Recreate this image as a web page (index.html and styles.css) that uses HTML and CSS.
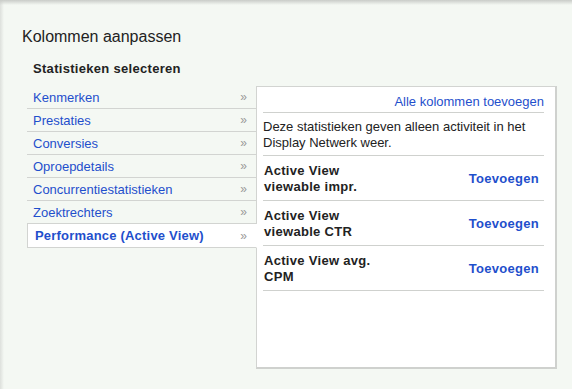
FILE: index.html
```html
<!DOCTYPE html>
<html lang="nl">
  <head>
    <meta charset="UTF-8" />
    <meta name="viewport" content="width=device-width, initial-scale=1.0" />
    <title>Kolommen aanpassen</title>
    <link rel="stylesheet" href="styles.css">
  </head>
  <body>
    <div class="page">
      <h1>Kolommen aanpassen</h1>
      <h2>Statistieken selecteren</h2>

      <div class="picker">
        <ul class="menu">
          <li><a href="#">Kenmerken</a><span class="arrow">&raquo;</span></li>
          <li><a href="#">Prestaties</a><span class="arrow">&raquo;</span></li>
          <li><a href="#">Conversies</a><span class="arrow">&raquo;</span></li>
          <li><a href="#">Oproepdetails</a><span class="arrow">&raquo;</span></li>
          <li><a href="#">Concurrentiestatistieken</a><span class="arrow">&raquo;</span></li>
          <li><a href="#">Zoektrechters</a><span class="arrow">&raquo;</span></li>
          <li class="selected"><a href="#">Performance (Active View)</a><span class="arrow">&raquo;</span></li>
        </ul>

        <div class="panel">
          <div class="panel-head">
            <a href="#">Alle kolommen toevoegen</a>
          </div>
          <p class="note">
            Deze statistieken geven alleen activiteit in het Display Netwerk weer.
          </p>
          <div class="stat">
            <span class="stat-name">Active View<br />viewable impr.</span>
            <a href="#" class="add">Toevoegen</a>
          </div>
          <div class="stat">
            <span class="stat-name">Active View<br />viewable CTR</span>
            <a href="#" class="add">Toevoegen</a>
          </div>
          <div class="stat">
            <span class="stat-name">Active View avg.<br />CPM</span>
            <a href="#" class="add">Toevoegen</a>
          </div>
        </div>
      </div>
    </div>
  </body>
</html>
```

FILE: styles.css
```css
html,
body {
  margin: 0;
  height: 100%;
}
body {
  font-family: Arial, "Liberation Sans", sans-serif;
  font-size: 13px;
  color: #222;
  background: #f4f8f3;
}
a {
  text-decoration: none;
  color: #1f4fcc;
}
.page {
  height: 100%;
  box-sizing: border-box;
  padding: 27px 15px 0 22px;
  background-image: linear-gradient(#c9ccc8, rgba(244, 248, 243, 0) 5px),
    linear-gradient(to right, #dde0dc, rgba(244, 248, 243, 0) 4px);
}
h1 {
  margin: 0;
  font-size: 16px;
  font-weight: normal;
  line-height: 20px;
}
h2 {
  margin: 14px 0 0 11px;
  font-size: 13px;
  font-weight: bold;
  line-height: 16px;
  letter-spacing: 0.3px;
}
.picker {
  display: flex;
  margin: 9px 0 0 5px;
}
.menu {
  list-style: none;
  margin: 0;
  padding: 0;
  width: 229px;
  flex-shrink: 0;
  position: relative;
  z-index: 1;
}
.menu li {
  display: flex;
  align-items: center;
  justify-content: space-between;
  height: 22px;
  padding: 0 9px 0 6px;
  border-bottom: 1px solid #d2d4d1;
  border-right: 1px solid #d2d4d1;
  margin-right: -1px;
}
.menu li.selected {
  height: 23px;
  background: white;
  border: 1px solid #d2d4d1;
  border-top: none;
  border-right-color: white;
  padding-left: 7px;
}
.menu li.selected a {
  font-weight: bold;
  letter-spacing: 0.2px;
}
.arrow {
  color: #999;
  font-size: 12px;
}
.panel {
  width: 281px;
  height: 269px;
  flex-shrink: 0;
  background: white;
  border: 1px solid #d2d4d1;
  border-right: 2px solid #cfd1ce;
  border-bottom: 2px solid #cfd1ce;
  padding: 6px 11px 5px 6px;
}
.panel-head {
  text-align: right;
  line-height: 18px;
  padding-bottom: 1px;
  border-bottom: 1px solid #cfd1ce;
}
.note {
  margin: 0;
  padding: 6px 0 4px;
  line-height: 16px;
  border-bottom: 1px solid #cfd1ce;
}
.stat {
  display: flex;
  align-items: center;
  justify-content: space-between;
  padding: 7px 5px 5px 1px;
  line-height: 16px;
  border-bottom: 1px solid #cfd1ce;
  font-weight: bold;
  letter-spacing: 0.3px;
}
.add {
  font-weight: bold;
}
```
